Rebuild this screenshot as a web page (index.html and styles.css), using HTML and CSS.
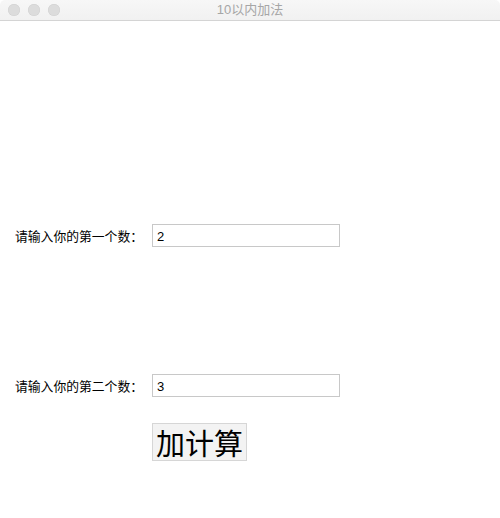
FILE: index.html
```html
<!DOCTYPE html>
<html lang="zh-CN">
<head>
  <meta charset="UTF-8">
  <title>10以内加法</title>
  <link rel="stylesheet" href="styles.css">
</head>
<body>

  <div class="titlebar">
    <div class="lights">
      <span class="light"></span>
      <span class="light"></span>
      <span class="light"></span>
    </div>
    <div class="title">10以内加法</div>
  </div>

  <div class="form">
    <div class="row first">
      <label class="label" for="num1">请输入你的第一个数：</label>
      <input class="entry" id="num1" type="text" value="2">
    </div>
    <div class="row second">
      <label class="label" for="num2">请输入你的第二个数：</label>
      <input class="entry" id="num2" type="text" value="3">
    </div>
    <div class="row actions">
      <button class="add-btn">加计算</button>
    </div>
  </div>

</body>
</html>
```

FILE: styles.css
```css
body {
  margin: 0;
  background: #ffffff;
  font-family: "Liberation Sans", "Noto Sans CJK SC", sans-serif;
  color: #000;
}

.titlebar {
  position: relative;
  height: 20px;
  background: linear-gradient(#f7f7f7, #f1f1f1);
  border-bottom: 1px solid #d4d4d4;
  border-radius: 5px 5px 0 0;
}

.lights {
  position: absolute;
  top: 4px;
  left: 8px;
  display: flex;
  gap: 8px;
}

.light {
  width: 12px;
  height: 12px;
  border-radius: 50%;
  background: #dcdcdc;
  box-shadow: inset 0 0 0 0.5px #d0d0d0;
}

.title {
  text-align: center;
  line-height: 20px;
  font-size: 13px;
  color: #a6a6a6;
}

.form {
  padding-left: 15px;
}

.row {
  display: flex;
  align-items: center;
}

.row.first {
  margin-top: 203px;
}

.row.second {
  margin-top: 127px;
}

.row.actions {
  margin-top: 26px;
  padding-left: 137px;
}

.label {
  width: 137px;
  font-size: 12.8px;
  font-family: "Noto Sans CJK SC", sans-serif;
}

.entry {
  box-sizing: border-box;
  width: 188px;
  height: 23px;
  margin: 0;
  padding: 2px 4px 0;
  border: 1px solid #c8c8c8;
  border-radius: 0;
  outline: none;
  font-family: "Liberation Sans", sans-serif;
  font-size: 13px;
  color: #000;
}

.add-btn {
  box-sizing: border-box;
  width: 95px;
  height: 38px;
  margin: 0;
  padding: 0;
  border: 1px solid #d6d6d6;
  background: #f3f3f3;
  font-family: "Noto Sans CJK SC", sans-serif;
  font-size: 29px;
  line-height: 36px;
  color: #000;
}
```
